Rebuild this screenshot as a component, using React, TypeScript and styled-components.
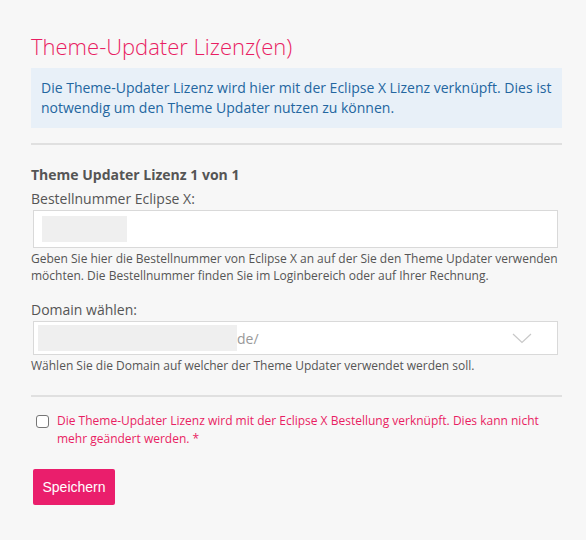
import React from "react";
import styled, { createGlobalStyle } from "styled-components";

const Global = createGlobalStyle`
  html, body { margin: 0; padding: 0; background: #f7f7f7; }
  body { font-family: "Open Sans", "DejaVu Sans", sans-serif; color: #555; }
  * { box-sizing: border-box; }
`;

const Page = styled.div`
  width: 586px;
  min-height: 540px;
  padding: 30px 24px 30px 31px;
  background: #f7f7f7;
`;

const Title = styled.h2`
  margin: 0 0 6px;
  font-family: "Open Sans", sans-serif;
  font-weight: 300;
  font-size: 22px;
  line-height: 32px;
  color: #e91e63;
`;

const InfoBox = styled.div`
  background: #e8f0f8;
  color: #2366a0;
  font-size: 14px;
  line-height: 20px;
  padding: 10px 10px;
`;

const Divider = styled.hr<{ $top: number }>`
  margin: ${(p) => p.$top}px 0 0;
  border: 0;
  height: 2px;
  background: #e0e0e0;
`;

const Form = styled.div`
  padding: 0 4px 0 2px;
`;

const SectionHead = styled.div`
  margin-top: 20px;
  margin-left: -2px;
  font-weight: 700;
  font-size: 14px;
  line-height: 20px;
  color: #555;
`;

const Label = styled.div<{ $top: number }>`
  margin-top: ${(p) => p.$top}px;
  margin-left: -2px;
  font-size: 14px;
  line-height: 20px;
  color: #555;
`;

const Field = styled.div<{ $h: number }>`
  margin-top: 1px;
  height: ${(p) => p.$h}px;
  background: #fff;
  border: 1px solid #d9d9d9;
  display: flex;
  align-items: center;
  padding: 0 0 0 ${(p) => (p.$h > 35 ? 8 : 4)}px;
  position: relative;
`;

const Redacted = styled.span<{ $w: number; $h: number }>`
  display: inline-block;
  width: ${(p) => p.$w}px;
  height: ${(p) => p.$h}px;
  background: #efefef;
`;

const Suffix = styled.span`
  font-size: 14px;
  color: #999;
`;

const Chevron = styled.svg`
  position: absolute;
  right: 25px;
  top: 11px;
`;

const Help = styled.div`
  margin-top: 2px;
  margin-left: -2px;
  margin-right: -4px;
  font-size: 12px;
  line-height: 17px;
  color: #555;
`;

const CheckRow = styled.label`
  display: flex;
  align-items: flex-start;
  gap: 8px;
  margin-top: 15px;
  margin-left: 5px;
`;

const Box = styled.span`
  flex: none;
  width: 13px;
  height: 13px;
  margin-top: 3px;
  border: 1px solid #767676;
  border-radius: 3px;
  background: #fff;
`;

const CheckText = styled.span`
  font-size: 12px;
  line-height: 18px;
  color: #e91e63;
`;

const Button = styled.button`
  margin-top: 21px;
  margin-left: 2px;
  width: 82px;
  height: 36px;
  border: 0;
  border-radius: 2px;
  background: #ea1e6c;
  color: #fff;
  font-family: "Liberation Sans", Arial, sans-serif;
  font-size: 14px;
  cursor: pointer;
`;

export default function App() {
  return (
    <>
      <Global />
      <Page>
        <Title>Theme-Updater Lizenz(en)</Title>
        <InfoBox>
          Die Theme-Updater Lizenz wird hier mit der Eclipse X Lizenz verknüpft. Dies ist notwendig um den
          Theme Updater nutzen zu können.
        </InfoBox>
        <Divider $top={15} />
        <Form>
          <SectionHead>Theme Updater Lizenz 1 von 1</SectionHead>
          <Label $top={4}>Bestellnummer Eclipse X:</Label>
          <Field $h={38}>
            <Redacted $w={85} $h={26} />
          </Field>
          <Help>
            Geben Sie hier die Bestellnummer von Eclipse X an auf der Sie den Theme Updater verwenden
            möchten. Die Bestellnummer finden Sie im Loginbereich oder auf Ihrer Rechnung.
          </Help>
          <Label $top={16}>Domain wählen:</Label>
          <Field $h={34}>
            <Redacted $w={199} $h={26} />
            <Suffix>de/</Suffix>
            <Chevron width="20" height="11" viewBox="0 0 20 11">
              <path d="M1 1 L10 9.5 L19 1" fill="none" stroke="#c8c8c8" strokeWidth="1.2" />
            </Chevron>
          </Field>
          <Help>Wählen Sie die Domain auf welcher der Theme Updater verwendet werden soll.</Help>
        </Form>
        <Divider $top={21} />
        <CheckRow>
          <Box />
          <CheckText>
            Die Theme-Updater Lizenz wird mit der Eclipse X Bestellung verknüpft. Dies kann nicht mehr
            geändert werden. *
          </CheckText>
        </CheckRow>
        <Button>Speichern</Button>
      </Page>
    </>
  );
}
